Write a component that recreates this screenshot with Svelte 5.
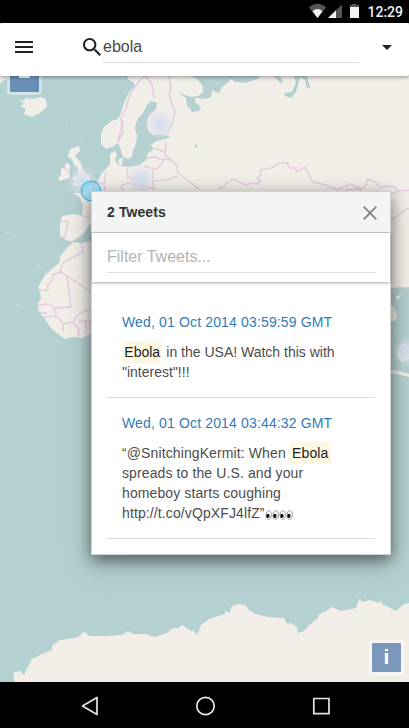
<script>
  const tweets = [
    {
      date: 'Wed, 01 Oct 2014 03:59:59 GMT',
      before: '',
      after: ' in the USA! Watch this with "interest"!!!',
      eyes: 0
    },
    {
      date: 'Wed, 01 Oct 2014 03:44:32 GMT',
      before: '“@SnitchingKermit: When ',
      after: ' spreads to the U.S. and your homeboy starts coughing http://t.co/vQpXFJ4lfZ”',
      eyes: 4
    }
  ];

  const land = [
    // Eurasia
    'M133 70L127 79L133 82L135 86L129 92L124 103L121 113L118 119L111 121L104 127L101 134L101 144L106 149L112 147L118 143L121 150L123 157L128 159L132 157L133 150L136 144L137 136L135 128L137 120L143 113L147 105L151 101L157 103L156 109L149 116L147 122L148 130L153 135L162 134L171 137L165 139L156 141L151 145L154 149L148 153L146 160L139 165L129 167L122 166L118 165L115 160L117 155L115 151L110 154L110 164L105 170L101 174L98 181L91 184L86 190L81 193L73 193L80 198L83 205L82 216L74 214L62 216L60 224L60 236L66 240L73 242L81 238L89 225L100 219L300 240V300L388 289L400 287L409 288V70Z',
    // British Isles
    'M70 149L79 146L80 151L75 156L81 163L83 171L90 176L89 182L82 184L75 186L72 184L77 181L72 179L78 174L78 168L74 165L72 159L68 157Z',
    'M61 169L65 167L64 163L70 164L69 178L60 181L58 178L61 175Z',
    // Iceland
    'M18 99L23 101L26 98L34 99L40 97L46 99L47 107L40 113L32 117L24 114L26 109L20 106L24 104Z',
    'M0 73H25L8 78L0 83Z',
    // Denmark
    'M119 159L123 158L122 165L118 164Z',
    // Africa
    'M61 255L67 248L73 242L90 241L120 240V333H91L82 338L72 337L65 339L58 334L50 327L45 319L39 312L38 303L41 299L40 291L38 287L45 275L53 268L59 263Z',
    'M396 296L401 295L399 299L396 299Z',
    'M389 303L394 308L397 316L396 320L390 322L386 317V304Z',
    'M397 350L403 343L409 346V359L402 362L397 356Z',
    'M390 370L400 371L409 374V377L391 373Z',
    // Antarctica
    'M16 690L13 673L20 671L24 675L27 669L32 659L42 654L52 650V646L60 640L74 638L80 636L82 633L85 632L89 636L105 636L122 635L128 631L133 634L145 634L155 637L167 633L173 628L178 628L182 625L190 630L192 632L193 629L196 635L199 631L201 625L209 619L221 615L225 614V611L230 613L231 607L238 604L245 605L249 610L256 614L268 617L284 618L287 624L291 623L297 627L298 633L304 631L309 625L317 619L319 614L326 611L332 607L341 611L356 608L360 598L362 602L370 600L379 603L381 600L382 604L396 611L404 604L409 603V690Z'
  ];

  const water = [
    // White Sea and its gulfs
    'M186 74L197 79L203 86L203 92L198 96L190 97L178 92L186 98L187 106L191 109V113L197 111L201 110L199 105L195 102V98L204 99L211 97L212 90L215 92L219 93L222 87L226 84L231 79L235 82L245 83L258 79L260 76H274L281 84L283 80L278 76V70H186Z',
    'M293 74L296 82L292 92L284 93L285 96L291 98L296 92L298 85L300 77L305 80L307 88L310 88L307 76V74Z',
    'M195 144l3 3-1 1-3-2z',
    // Western Mediterranean
    'M71 242L76 239L82 235L87 229L92 227V241L82 243Z'
  ];

  const borders = [
    'M123 120L118 142L123 132L121 118L126 108L130 94L139 81L145 76L152 84L154 99',
    'M168 70L171 88L169 95L175 112L173 121L167 134',
    'M166 142L165 155L171 160L177 166L178 173L183 177L199 189',
    'M155 148L164 152M147 158L155 157L160 159L171 160M144 166L151 168L157 169L165 159M153 169V181L166 180L178 176',
    'M127 168L128 177L136 180L145 186L154 189L152 181M128 183L121 186L124 191M128 183L136 185L145 190',
    'M106 171L104 184L97 182L91 186M104 184L105 192M97 182L92 189',
    'M65 163L64 168L69 172',
    'M83 216L90 218M61 221L68 222L65 237L62 238',
    'M219 190L221 186L224 188L226 183L233 179L245 185L252 183L258 184L261 181L257 178L261 175L260 170L271 168L280 163L287 163L290 168L296 168V172L301 170L305 167L313 182L326 185L337 190L350 184L362 189L366 185L368 179L375 182L380 187L393 186L399 191L409 190',
    'M325 190L330 195L337 196L347 190L358 189L370 196L379 195L388 196L398 191',
    'M386 219L396 218L404 210L409 209M386 309L391 315L389 320M386 290L391 289L394 291',
    'M81 243L83 252L70 259L62 264L60 271L76 282L91 292M61 272L53 275L52 281L48 284V290H39',
    'M67 277L71 307L54 308L49 304L39 305M39 313H47M39 318L54 316L59 318L63 324V331M54 308L56 315M73 322L77 316L84 311L91 309M63 324L73 322L79 330L78 337M79 322L90 320V332M86 322V334',
    'M397 350H400L404 346L409 348'
  ];
</script>

<div class="screen">
  <svg class="map" width="409" height="728" viewBox="0 0 409 728" aria-hidden="true">
    <defs>
      <radialGradient id="heat">
        <stop offset="0" stop-color="#c8dbeb" stop-opacity=".9" />
        <stop offset=".5" stop-color="#d8deed" stop-opacity=".65" />
        <stop offset="1" stop-color="#e4e2ee" stop-opacity="0" />
      </radialGradient>
    </defs>
    <rect width="409" height="728" fill="#b5d0d0" />
    {#each land as d}
      <path {d} fill="#f1eee8" />
    {/each}
    {#each water as d}
      <path {d} fill="#b5d0d0" />
    {/each}
    <path d="M387 300L391 291L409 287V560H387Z" fill="#b5d0d0" />
    {#each land.slice(7, 11) as d}
      <path {d} fill="#f1eee8" />
    {/each}
    {#each borders as d}
      <path {d} fill="none" stroke="#dfbfdd" stroke-width="1.5" stroke-linejoin="round" opacity=".75" />
    {/each}
    <path d="M66 124l1 3M82 136l1 3M6 233h3M13 236h3M36 267h5M44 266l3-2M15 304l6 1M39 253h2M349 602h1" stroke="#d2ded9" />
    <circle cx="160" cy="124" r="16" fill="url(#heat)" />
    <circle cx="141" cy="179" r="16" fill="url(#heat)" />
    <circle cx="82" cy="181" r="15" fill="url(#heat)" />
    <circle cx="407" cy="352" r="15" fill="url(#heat)" />
    <circle cx="91" cy="191" r="9.800" fill="#73d5fb" fill-opacity=".55" stroke="#19bdf0" />
  </svg>

  <div class="status">
    <svg width="52" height="17" viewBox="0 0 52 17" aria-label="Wi-Fi, signal, battery">
      <path d="M0 4.500Q8.500-3 17 4.500L8.500 15z" fill="#555" />
      <path d="M3.500 8.200Q8.500 4 13.500 8.200L8.500 15z" fill="#f2f2f2" />
      <path d="M33 1.500V15H19z" fill="#555" />
      <path d="M27 7.300V15H19z" fill="#f2f2f2" />
      <path d="M43 1h4v1h3v3h-9V2h2z" fill="#555" />
      <path d="M41 4h9v11h-9z" fill="#f2f2f2" />
    </svg>
    <span>12:29</span>
  </div>

  <header>
    <svg class="burger" width="18" height="12" viewBox="0 0 18 12" aria-label="Menu">
      <path d="M0 1h18M0 6h18M0 11h18" stroke="#212121" stroke-width="2" />
    </svg>
    <svg class="search" width="18" height="18" viewBox="3 3 17.500 17.500" aria-label="Search">
      <path fill="#212121" d="M15.500 14h-.79l-.28-.27C15.410 12.590 16 11.110 16 9.500 16 5.910 13.090 3 9.500 3S3 5.910 3 9.500 5.910 16 9.500 16c1.610 0 3.090-.59 4.230-1.570l.27.28v.79l5 4.990L20.490 19l-4.990-5zm-6 0C7.010 14 5 11.990 5 9.500S7.010 5 9.500 5 14 7.010 14 9.500 11.990 14 9.500 14z" />
    </svg>
    <div class="query">ebola</div>
    <svg class="caret" width="10" height="5" viewBox="0 0 10 5" aria-label="Options">
      <path d="M0 0h10L5 5z" fill="#212121" />
    </svg>
  </header>

  <main>
    <div class="zoom-out"><i></i></div>

    <section class="panel">
      <div class="title">
        <span>2 Tweets</span>
        <svg width="14" height="14" viewBox="0 0 14 14" aria-label="Close">
          <path d="M.7.7l12.600 12.600M13.300.7L.7 13.300" stroke="#858585" stroke-width="1.900" />
        </svg>
      </div>
      <div class="filter"><div>Filter Tweets...</div></div>
      <div class="list">
        {#each tweets as t}
          <article class:wide={t.eyes > 0}>
            <a href="#top">{t.date}</a>
            <p>{t.before}<mark>Ebola</mark>{t.after}{#if t.eyes}<svg class="eyes" width="28" height="10" viewBox="0 0 28 10" aria-label="eyes">
              {#each Array(t.eyes) as _, i}
                <ellipse cx={3.7 + i * 7} cy="5" rx="2.700" ry="4.200" fill="#fff" stroke="#888" stroke-width=".8" />
                <ellipse cx={2.9 + i * 7} cy="5.900" rx="1.700" ry="2.100" fill="#111" />
              {/each}
            </svg>{/if}</p>
          </article>
        {/each}
      </div>
    </section>

    <div class="info">i</div>
  </main>

  <nav>
    <svg width="409" height="46" viewBox="0 0 409 46" fill="none" stroke="#e6e6e6" stroke-width="1.700" stroke-linejoin="round" aria-label="Navigation">
      <path d="M97 15.500v17L82.500 24z" />
      <circle cx="205.500" cy="24" r="8.700" />
      <path d="M313.800 16.500h15.200v15.200h-15.200z" />
    </svg>
  </nav>
</div>

<style>
  .screen {
    position: relative;
    width: 409px;
    height: 728px;
    overflow: hidden;
    display: flex;
    flex-direction: column;
    font-family: "Liberation Sans", Arial, sans-serif;
    background: #b5d0d0;
  }
  .map {
    position: absolute;
    left: 0;
    top: 0;
  }
  .status {
    position: relative;
    z-index: 2;
    flex: none;
    height: 23px;
    box-sizing: border-box;
    padding: 3px 6px 0 0;
    background: #000;
    display: flex;
    justify-content: flex-end;
    gap: 6px;
    color: #eee;
    font: 500 14px/18px Roboto, sans-serif;
  }
  header {
    position: relative;
    z-index: 2;
    flex: none;
    box-sizing: border-box;
    height: 53px;
    padding: 0 17px 0 15px;
    background: #fff;
    border-radius: 2px;
    box-shadow: 0 1px 4px rgba(0, 0, 0, 0.4);
    display: flex;
    align-items: flex-start;
  }
  .burger {
    margin-top: 18px;
  }
  .search {
    margin: 15px 2px 0 50px;
  }
  .query {
    width: 256px;
    height: 40px;
    box-sizing: border-box;
    padding-top: 14px;
    border-bottom: 1px solid #ddd;
    font-size: 16px;
    line-height: 20px;
    color: #4a4a4a;
  }
  .caret {
    margin: 22px 0 0 auto;
  }
  main {
    position: relative;
    flex: 1;
    display: flex;
    flex-direction: column;
  }
  .zoom-out {
    position: absolute;
    left: 7px;
    top: -16px;
    width: 29px;
    height: 29px;
    border: 3px solid rgba(255, 255, 255, 0.4);
    border-radius: 4px;
    background: #698fb8;
    background-clip: padding-box;
  }
  .zoom-out i {
    display: block;
    width: 11px;
    height: 3px;
    margin: 12px 9px;
    background: #fff;
  }
  .panel {
    position: relative;
    width: 300px;
    height: 364px;
    box-sizing: border-box;
    margin: 115px 0 0 91px;
    background: #fff;
    border: 1px solid #d2d2d2;
    box-shadow: 0 5px 15px rgba(0, 0, 0, 0.5), 0 12px 30px rgba(0, 0, 0, 0.12);
  }
  .title {
    height: 40px;
    padding: 0 13px 0 15px;
    background: #f4f4f4;
    border-bottom: 1px solid #ccc;
    display: flex;
    justify-content: space-between;
    align-items: center;
    font-size: 14px;
    font-weight: bold;
    letter-spacing: 0.1px;
    color: #333;
  }
  .title svg {
    margin-top: 2px;
  }
  .filter {
    height: 49px;
    box-sizing: border-box;
    padding: 0 15px;
    box-shadow: 0 1px 3px rgba(0, 0, 0, 0.35);
  }
  .filter div {
    height: 40px;
    box-sizing: border-box;
    padding-top: 14px;
    border-bottom: 1px solid #ddd;
    font-size: 16px;
    line-height: 20px;
    color: #b3b3b3;
  }
  .list {
    padding: 15px 15px 0;
  }
  article {
    box-sizing: border-box;
    padding: 15px 15px;
    border-bottom: 1px solid #ddd;
    font-size: 14px;
    line-height: 20px;
    color: #4c4c4c;
  }
  article a {
    display: block;
    color: #337ab7;
    text-decoration: none;
    letter-spacing: 0.15px;
  }
  article p {
    margin: 10px 0 0;
  }
  .wide p {
    letter-spacing: 0.11px;
  }
  mark {
    padding: 0.2em 2.300px;
    background: #fcf8e3;
    color: #222;
  }
  .eyes {
    vertical-align: -2px;
  }
  .info {
    position: absolute;
    right: 5px;
    bottom: 7px;
    width: 29px;
    height: 29px;
    border: 3px solid rgba(255, 255, 255, 0.5);
    border-radius: 4px;
    background: #7b98bc;
    background-clip: padding-box;
    color: #fff;
    font: bold 21px/28px "Liberation Sans", Arial, sans-serif;
    text-align: center;
  }
  nav {
    position: relative;
    flex: none;
    height: 46px;
    background: #000;
  }
  nav svg {
    display: block;
  }
</style>
